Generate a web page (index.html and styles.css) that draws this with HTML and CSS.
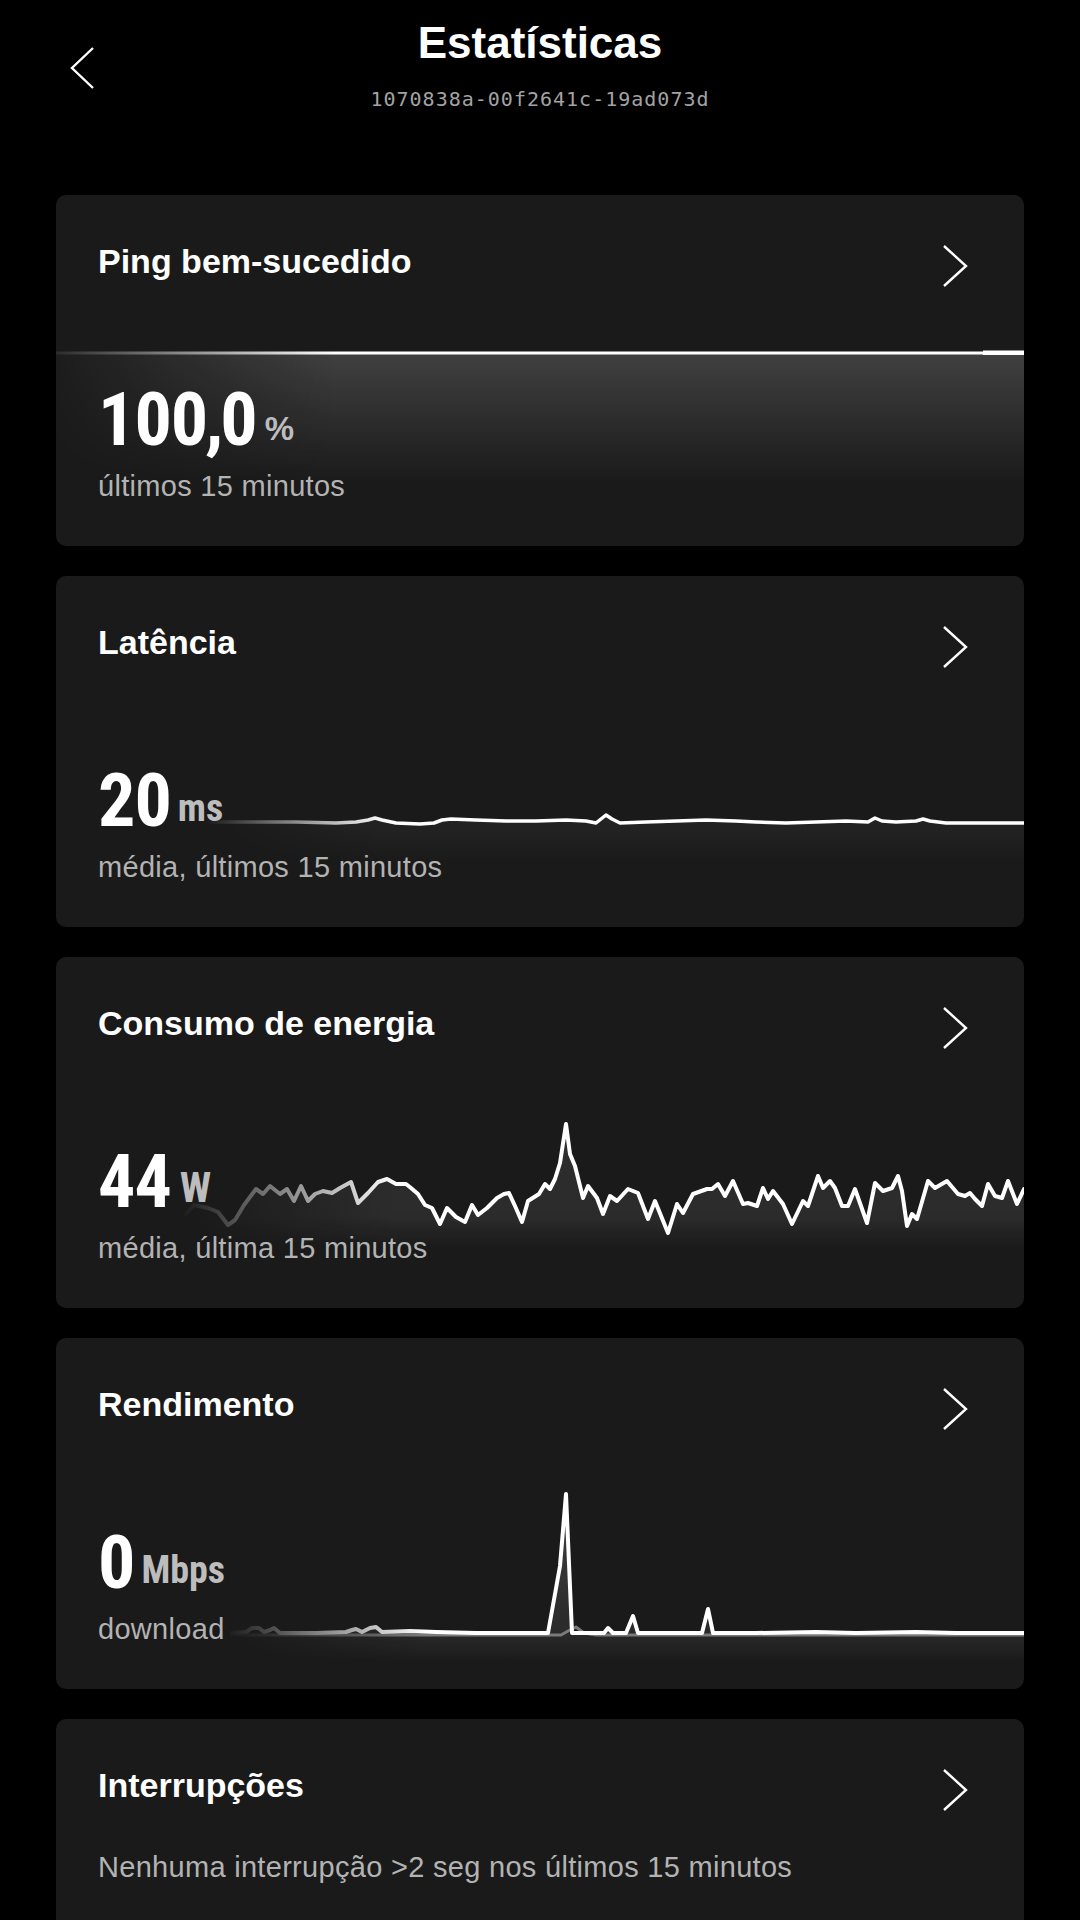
FILE: index.html
```html
<!DOCTYPE html>
<html lang="pt">

<head>
    <meta charset="UTF-8">
    <meta name="viewport" content="width=device-width, initial-scale=1.0">
    <title>Estatísticas</title>
    <link rel="stylesheet" href="styles.css">
</head>

<body>
    <header class="top-bar">
        <button class="back" aria-label="Voltar">
            <svg width="26" height="44" viewBox="0 0 26 44">
                <path d="M24 2 L3 22 L24 42" fill="none" stroke="#fff" stroke-width="2.4" />
            </svg>
        </button>
        <div class="heading">
            <h1 class="page-title">Estatísticas</h1>
            <div class="device-id">1070838a-00f2641c-19ad073d</div>
        </div>
    </header>

    <main class="stats">
        <!-- ping -->
        <section class="card">
            <svg class="chart" width="968" height="351" viewBox="0 0 968 351">
                <defs>
                    <linearGradient id="fadePing" gradientUnits="userSpaceOnUse" x1="0" y1="0" x2="280" y2="0">
                        <stop offset="0" stop-color="#fff" stop-opacity="0.08" />
                        <stop offset="1" stop-color="#fff" />
                    </linearGradient>
                    <mask id="maskPing">
                        <rect width="968" height="351" fill="url(#fadePing)" />
                    </mask>
                    <linearGradient id="fillPing" gradientUnits="userSpaceOnUse" x1="0" y1="158" x2="0" y2="290">
                        <stop offset="0" stop-color="#fff" stop-opacity="0.17" />
                        <stop offset="1" stop-color="#fff" stop-opacity="0" />
                    </linearGradient>
                </defs>
                <g mask="url(#maskPing)">
                    <path d="M0 158 H968 V351 H0 Z" fill="url(#fillPing)" />
                    <path d="M0 158 H968" fill="none" stroke="#fff" stroke-width="3" />
                    <rect x="927" y="155.5" width="41" height="4.5" fill="#fff" />
                </g>
            </svg>
            <div class="card-head">
                <h2 class="card-title">Ping bem-sucedido</h2>
                <svg class="chev" width="26" height="44" viewBox="0 0 26 44">
                    <path d="M2 2 L24 22 L2 42" fill="none" stroke="#fff" stroke-width="2.4" />
                </svg>
            </div>
            <div class="value"><span class="num">100<span class="sep">,</span>0</span><span class="unit unit-pct">%</span></div>
            <p class="caption">últimos 15 minutos</p>
        </section>

        <!-- latency -->
        <section class="card">
            <svg class="chart" width="968" height="351" viewBox="0 0 968 351">
                <defs>
                    <linearGradient id="fadeLat" gradientUnits="userSpaceOnUse" x1="150" y1="0" x2="330" y2="0">
                        <stop offset="0" stop-color="#fff" stop-opacity="0" />
                        <stop offset="1" stop-color="#fff" />
                    </linearGradient>
                    <mask id="maskLat">
                        <rect width="968" height="351" fill="url(#fadeLat)" />
                    </mask>
                    <linearGradient id="fillLat" gradientUnits="userSpaceOnUse" x1="0" y1="240" x2="0" y2="290">
                        <stop offset="0" stop-color="#fff" stop-opacity="0.05" />
                        <stop offset="1" stop-color="#fff" stop-opacity="0" />
                    </linearGradient>
                </defs>
                <g mask="url(#maskLat)">
                    <polygon fill="url(#fillLat)" points="150,246 200,246 240,246 280,247 300,246 312,244 319,242 326,244 340,247 364,248 378,247 386,244 395,243 420,244 450,245 480,245 510,244 530,245 540,247 545,243 550,239 556,243 564,247 590,246 620,245 650,244 680,245 700,246 730,247 760,246 790,245 812,246 819,242 826,245 840,246 860,245 867,243 874,245 890,247 930,247 968,247 968,351 150,351" />
                    <polyline fill="none" stroke="#fff" stroke-width="3.5" stroke-linejoin="round" points="150,246 200,246 240,246 280,247 300,246 312,244 319,242 326,244 340,247 364,248 378,247 386,244 395,243 420,244 450,245 480,245 510,244 530,245 540,247 545,243 550,239 556,243 564,247 590,246 620,245 650,244 680,245 700,246 730,247 760,246 790,245 812,246 819,242 826,245 840,246 860,245 867,243 874,245 890,247 930,247 968,247" />
                </g>
            </svg>
            <div class="card-head">
                <h2 class="card-title">Latência</h2>
                <svg class="chev" width="26" height="44" viewBox="0 0 26 44">
                    <path d="M2 2 L24 22 L2 42" fill="none" stroke="#fff" stroke-width="2.4" />
                </svg>
            </div>
            <div class="value"><span class="num">20</span><span class="unit">ms</span></div>
            <p class="caption">média, últimos 15 minutos</p>
        </section>

        <!-- power -->
        <section class="card">
            <svg class="chart" width="968" height="351" viewBox="0 0 968 351">
                <defs>
                    <linearGradient id="fadePow" gradientUnits="userSpaceOnUse" x1="125" y1="0" x2="340" y2="0">
                        <stop offset="0" stop-color="#fff" stop-opacity="0" />
                        <stop offset="1" stop-color="#fff" />
                    </linearGradient>
                    <mask id="maskPow">
                        <rect width="968" height="351" fill="url(#fadePow)" />
                    </mask>
                    <linearGradient id="fillPow" gradientUnits="userSpaceOnUse" x1="0" y1="160" x2="0" y2="292">
                        <stop offset="0" stop-color="#fff" stop-opacity="0.09" />
                        <stop offset="0.75" stop-color="#fff" stop-opacity="0.08" />
                        <stop offset="1" stop-color="#fff" stop-opacity="0" />
                    </linearGradient>
                </defs>
                <g mask="url(#maskPow)">
                    <polygon fill="url(#fillPow)" points="124,263 138,248 152,251 162,255 172,268 179,263 188,248 200,232 207,237 214,229 224,237 231,232 238,244 245,229 252,244 259,237 267,234 276,236 284,231 295,225 302,246 312,236 322,225 331,222 340,227 350,227 355,231 362,237 369,248 376,251 384,267 391,251 400,260 409,265 416,248 422,258 431,251 441,241 448,237 453,236 459,249 466,265 472,244 483,237 489,227 494,232 499,222 504,206 510,167 514,197 519,209 527,241 532,229 541,241 547,257 554,239 561,244 572,232 582,236 592,262 599,244 612,276 621,247 627,256 637,237 651,232 656,232 662,227 669,239 677,224 687,247 692,246 701,249 707,231 712,242 717,234 727,247 736,267 747,244 752,249 762,219 767,231 774,224 779,231 786,249 792,249 799,232 811,266 819,226 827,234 836,231 842,219 846,234 851,269 856,257 861,262 872,224 879,231 891,224 902,237 909,239 914,236 919,242 926,249 932,227 939,239 946,241 952,224 961,247 968,232 968,351 124,351" />
                    <polyline fill="none" stroke="#fff" stroke-width="4" stroke-linejoin="round" stroke-linecap="round" points="124,263 138,248 152,251 162,255 172,268 179,263 188,248 200,232 207,237 214,229 224,237 231,232 238,244 245,229 252,244 259,237 267,234 276,236 284,231 295,225 302,246 312,236 322,225 331,222 340,227 350,227 355,231 362,237 369,248 376,251 384,267 391,251 400,260 409,265 416,248 422,258 431,251 441,241 448,237 453,236 459,249 466,265 472,244 483,237 489,227 494,232 499,222 504,206 510,167 514,197 519,209 527,241 532,229 541,241 547,257 554,239 561,244 572,232 582,236 592,262 599,244 612,276 621,247 627,256 637,237 651,232 656,232 662,227 669,239 677,224 687,247 692,246 701,249 707,231 712,242 717,234 727,247 736,267 747,244 752,249 762,219 767,231 774,224 779,231 786,249 792,249 799,232 811,266 819,226 827,234 836,231 842,219 846,234 851,269 856,257 861,262 872,224 879,231 891,224 902,237 909,239 914,236 919,242 926,249 932,227 939,239 946,241 952,224 961,247 968,232" />
                </g>
            </svg>
            <div class="card-head">
                <h2 class="card-title">Consumo de energia</h2>
                <svg class="chev" width="26" height="44" viewBox="0 0 26 44">
                    <path d="M2 2 L24 22 L2 42" fill="none" stroke="#fff" stroke-width="2.4" />
                </svg>
            </div>
            <div class="value"><span class="num">44</span><span class="unit unit-w">W</span></div>
            <p class="caption">média, última 15 minutos</p>
        </section>

        <!-- throughput -->
        <section class="card">
            <svg class="chart" width="968" height="351" viewBox="0 0 968 351">
                <defs>
                    <linearGradient id="fadeThr" gradientUnits="userSpaceOnUse" x1="170" y1="0" x2="370" y2="0">
                        <stop offset="0" stop-color="#fff" stop-opacity="0" />
                        <stop offset="1" stop-color="#fff" />
                    </linearGradient>
                    <mask id="maskThr">
                        <rect width="968" height="351" fill="url(#fadeThr)" />
                    </mask>
                    <linearGradient id="fillThr" gradientUnits="userSpaceOnUse" x1="0" y1="150" x2="0" y2="325">
                        <stop offset="0" stop-color="#fff" stop-opacity="0.18" />
                        <stop offset="0.83" stop-color="#fff" stop-opacity="0.07" />
                        <stop offset="1" stop-color="#fff" stop-opacity="0" />
                    </linearGradient>
                </defs>
                <g mask="url(#maskThr)">
                    <polygon fill="url(#fillThr)" points="174,295 190,294 196,290 203,290 208,294 214,292 218,290 224,295 260,295 290,294 296,292 300,291 306,294 314,290 320,289 326,294 354,293 380,294 420,295 470,295 492,295 504,228 510,156 516,295 548,295 552,290 557,295 570,295 577,278 582,295 646,295 652,271 657,295 700,295 760,294 800,295 860,294 900,295 968,295 968,351 174,351" />
                    <polyline fill="none" stroke="#7a7a7a" stroke-width="3" stroke-linejoin="round" points="174,297 480,297 505,297 512,293 520,289 528,295 540,297 968,297" />
                    <polyline fill="none" stroke="#fff" stroke-width="4" stroke-linejoin="round" points="174,295 190,294 196,290 203,290 208,294 214,292 218,290 224,295 260,295 290,294 296,292 300,291 306,294 314,290 320,289 326,294 354,293 380,294 420,295 470,295 492,295 504,228 510,156 516,295 548,295 552,290 557,295 570,295 577,278 582,295 646,295 652,271 657,295 700,295 760,294 800,295 860,294 900,295 968,295" />
                </g>
            </svg>
            <div class="card-head">
                <h2 class="card-title">Rendimento</h2>
                <svg class="chev" width="26" height="44" viewBox="0 0 26 44">
                    <path d="M2 2 L24 22 L2 42" fill="none" stroke="#fff" stroke-width="2.4" />
                </svg>
            </div>
            <div class="value"><span class="num">0</span><span class="unit">Mbps</span></div>
            <p class="caption">download</p>
        </section>

        <!-- outages -->
        <section class="card">
            <div class="card-head">
                <h2 class="card-title">Interrupções</h2>
                <svg class="chev" width="26" height="44" viewBox="0 0 26 44">
                    <path d="M2 2 L24 22 L2 42" fill="none" stroke="#fff" stroke-width="2.4" />
                </svg>
            </div>
            <p class="note">Nenhuma interrupção &gt;2 seg nos últimos 15 minutos</p>
        </section>
    </main>
</body>

</html>
```

FILE: styles.css
```css
* {
    box-sizing: border-box;
}

body {
    margin: 0;
    background: #000;
    color: #fff;
    font-family: "Liberation Sans", Arial, sans-serif;
}

.top-bar {
    display: grid;
    grid-template-columns: 1fr auto 1fr;
    padding-top: 17px;
}

.back {
    grid-column: 1;
    justify-self: start;
    align-self: start;
    display: block;
    width: 26px;
    height: 44px;
    margin: 29px 0 0 69px;
    padding: 0;
    border: none;
    background: none;
}

.back svg {
    display: block;
}

.heading {
    grid-column: 2;
    text-align: center;
}

.page-title {
    margin: 0;
    font-size: 44px;
    line-height: 52px;
    font-weight: 700;
}

.device-id {
    margin-top: 18px;
    font-family: "DejaVu Sans Mono", monospace;
    font-size: 20px;
    line-height: 24px;
    letter-spacing: 1px;
    color: #a3a3a3;
}

.stats {
    display: flex;
    flex-direction: column;
    gap: 30px;
    padding: 84px 56px 0;
}

.card {
    position: relative;
    isolation: isolate;
    flex: none;
    height: 351px;
    padding: 46px 56px 0 42px;
    background-color: #1a1a1a;
    border-radius: 10px;
    overflow: hidden;
}

.chart {
    position: absolute;
    left: 0;
    top: 0;
    z-index: 0;
}

.card-head,
.value,
.caption,
.note {
    position: relative;
    z-index: 1;
}

.card-head {
    display: flex;
    justify-content: space-between;
    align-items: flex-start;
    height: 40px;
}

.card-title {
    margin: 0;
    font-size: 34px;
    line-height: 40px;
    font-weight: 700;
}

.chev {
    display: block;
    flex: none;
    margin-top: 3px;
}

.value {
    margin-top: 102px;
    font-family: "Roboto Condensed", "Noto Sans", sans-serif;
    font-stretch: condensed;
    font-weight: 700;
    font-size: 74px;
    line-height: 74px;
    white-space: nowrap;
}

.num {
    letter-spacing: -1px;
}

.num .sep {
    margin: 0 -2px;
}

.unit {
    margin-left: 7px;
    font-size: 38px;
    line-height: 1;
    vertical-align: 5px;
    color: #bdbdbd;
}

.unit-pct {
    font-family: "Liberation Sans", sans-serif;
    font-stretch: normal;
    font-size: 33px;
    margin-left: 8px;
}

.unit-w {
    font-size: 42px;
    margin-left: 9px;
}

.caption,
.note {
    font-size: 29px;
    line-height: 34px;
    letter-spacing: 0.3px;
    color: #b3b3b3;
}

.caption {
    margin: 12px 0 0;
}

.note {
    margin: 45px 0 0;
}
```
